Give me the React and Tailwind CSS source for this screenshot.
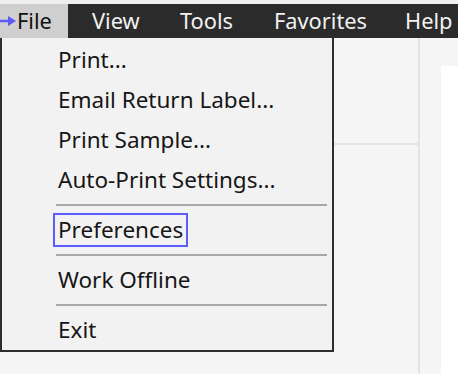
const menuItems = [
    "Print...",
    "Email Return Label...",
    "Print Sample...",
    "Auto-Print Settings...",
];

const Separator = () => (
    <div className="ml-[54px] mr-[5px] my-[4px] h-[2px] bg-[#a8a8a8]" />
);

const Item = ({ children }) => (
    <div className="h-[40px] flex items-center pl-[56px]">{children}</div>
);

const App = () => {
    return (
        <div
            className="relative w-[458px] h-[374px] overflow-hidden bg-[#f5f5f5] flex flex-col"
            style={{ fontFamily: '"Noto Sans", "Open Sans", sans-serif' }}
        >
            {/* barra superior */}
            <div className="h-[4px] bg-[#efefef]" />
            <div className="h-[34px] bg-[#2b2b2b] flex items-center text-[21.8px] text-[#f2f2f2]">
                <div className="w-[68px] h-full bg-[#cfcfcf] flex items-center text-[#111]">
                    <svg width="17" height="12" viewBox="0 0 17 12">
                        <path d="M0 6 H11" stroke="#5a5af5" strokeWidth="2.5" />
                        <path d="M8 1 L16 6 L8 11 Z" fill="#5a5af5" />
                    </svg>
                    <span>File</span>
                </div>
                <span className="w-[88px] pl-[24px] box-content">View</span>
                <span className="w-[94px]">Tools</span>
                <span className="w-[131px]">Favorites</span>
                <span>Help</span>
            </div>

            {/* contenido de fondo */}
            <div className="flex-1 flex">
                <div className="w-[420px] border-r-2 border-[#e4e4e8]">
                    <div className="mt-[105px] h-[2px] bg-[#e4e4e8]" />
                </div>
                <div className="flex-1 pl-[21px] pt-[28px] flex">
                    <div className="flex-1 bg-white" />
                </div>
            </div>

            {/* menu desplegable */}
            <div className="absolute left-0 top-[38px] w-[334px] h-[314px] bg-[#f2f2f2] border-x-2 border-b-2 border-[#2e2e2e] pt-[2px] text-[22.5px] text-[#161616]">
                {menuItems.map((label) => (
                    <Item key={label}>{label}</Item>
                ))}
                <Separator />
                <div className="h-[40px] flex items-center pl-[51px]">
                    <span className="h-[34px] flex items-center border-2 border-[#5c5cff] px-[3px]">
                        Preferences
                    </span>
                </div>
                <Separator />
                <Item>Work Offline</Item>
                <Separator />
                <Item>Exit</Item>
            </div>
        </div>
    );
};

export default App;
